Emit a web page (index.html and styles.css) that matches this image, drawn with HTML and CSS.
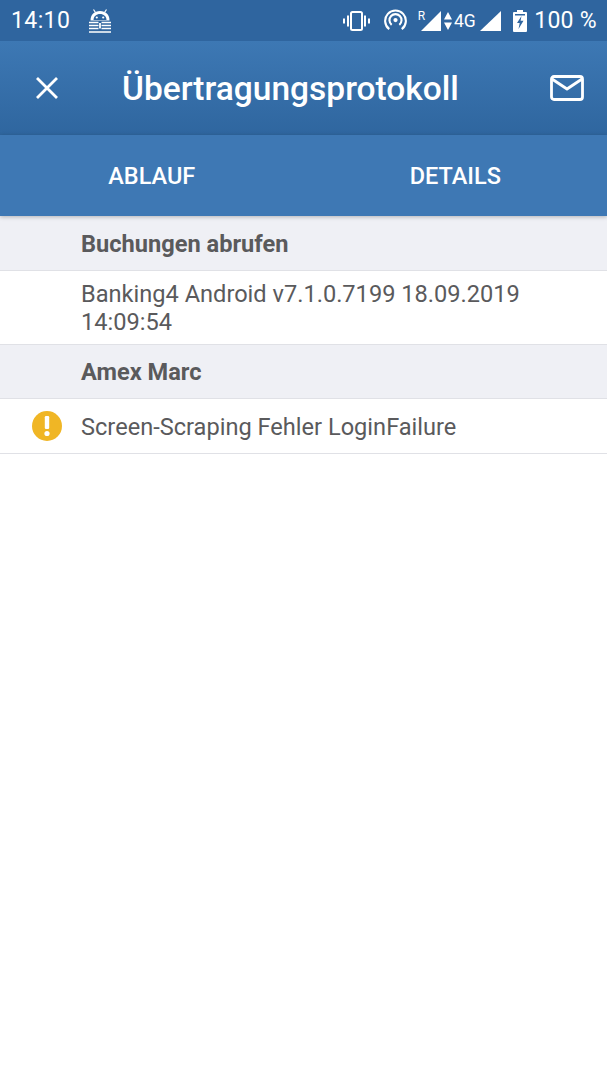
FILE: index.html
```html
<!DOCTYPE html>
<html lang="de">

<head>
  <meta charset="UTF-8">
  <meta name="viewport" content="width=device-width, initial-scale=1.0">
  <title>Übertragungsprotokoll</title>
  <link rel="stylesheet" href="styles.css">
</head>

<body>
  <!-- Statusleiste -->
  <div class="statusbar">
    <span class="clock">14:10</span>
    <svg class="ic-keepass" width="24" height="24" viewBox="0 0 24 24">
      <path d="M5.500.5l2 3M18.500.5l-2 3" stroke="#fff" stroke-width="1.200" fill="none"/>
      <path d="M2.500 11.500C2.500 5.500 6.500 2 12 2s9.500 3.500 9.500 9.500z" fill="#fff"/>
      <path d="M5.500 11c0-3.500 2.800-6 6.500-6s6.500 2.500 6.500 6z" fill="#2f659f"/>
      <circle cx="8.800" cy="8.500" r="1.100" fill="#fff"/>
      <circle cx="15.200" cy="8.500" r="1.100" fill="#fff"/>
      <path d="M1 13.500h9.500M13.500 13.500H23M1 16.500h9.500M13.500 16.500H23M1 19.500h9.500M13.500 19.500H23M1 23h22" stroke="#fff" stroke-width="1.700" fill="none"/>
      <path d="M12 14v5.500" stroke="#fff" stroke-width="1.800"/>
    </svg>
    <div class="status-right">
      <svg width="27" height="20" viewBox="0 0 27 20" fill="none" stroke="#fff">
        <rect x="8" y="1" width="11" height="18" rx="1.500" stroke-width="2"/>
        <path d="M5 4.500v11M22 4.500v11M1 7.500v5M26 7.500v5" stroke-width="2"/>
      </svg>
      <svg class="ic-hotspot" width="23" height="23" viewBox="0 0 24 24" fill="none" stroke="#fff" stroke-width="2.200">
        <circle cx="12" cy="11.500" r="2.200" fill="#fff" stroke="none"/>
        <path d="M8 16.500a6.300 6.300 0 1 1 8 0"/>
        <path d="M5.500 21a10.800 10.800 0 1 1 13 0"/>
      </svg>
      <div class="sig-r">
        <span class="roam">R</span>
        <svg width="20" height="20" viewBox="0 0 20 20"><path d="M0 20L20 0v20z" fill="#fff"/></svg>
      </div>
      <div class="sig-arrows">
        <svg width="8" height="18" viewBox="0 0 8 18"><path d="M4 0l4 7.500H0zM4 18L0 10.500h8z" fill="#fff"/></svg>
        <span class="net">4G</span>
      </div>
      <svg class="sig2" width="21" height="20" viewBox="0 0 21 20"><path d="M0 20L21 0v20z" fill="#fff"/></svg>
      <svg class="batt" width="14" height="22" viewBox="0 0 14 22">
        <path d="M4 0h6v2h3a1 1 0 0 1 1 1v18a1 1 0 0 1-1 1H1a1 1 0 0 1-1-1V3a1 1 0 0 1 1-1h3z" fill="#fff"/>
        <path d="M2 4h10v1.500H2z" fill="#2f659f"/>
        <path d="M8.500 6L4 13h2.700L5.500 19l5-8.200H7.600z" fill="#2f659f"/>
      </svg>
      <span class="pct">100 %</span>
    </div>
  </div>

  <!-- Titelleiste -->
  <div class="toolbar">
    <svg class="tb-close" width="24" height="24" viewBox="0 0 24 24" fill="none" stroke="#fff" stroke-width="2.800">
      <path d="M2 2l20 20M22 2L2 22"/>
    </svg>
    <h1 class="title">Übertragungsprotokoll</h1>
    <svg class="tb-mail" width="34" height="26" viewBox="0 0 34 26" fill="none" stroke="#fff" stroke-width="2.800" stroke-linejoin="round">
      <rect x="1.500" y="1.500" width="31" height="23" rx="2.500"/>
      <path d="M2 4l15 10L32 4"/>
    </svg>
  </div>

  <div class="tabs">
    <div class="tab">ABLAUF</div>
    <div class="tab">DETAILS</div>
  </div>

  <div class="log">
    <div class="log-head">Buchungen abrufen</div>
    <div class="log-row log-row-wrap">Banking4 Android v7.1.0.7199 18.09.2019 14:09:54</div>
    <div class="log-head">Amex Marc</div>
    <div class="log-row">
      <svg class="warn" width="30" height="30" viewBox="0 0 30 30">
        <circle cx="15" cy="15" r="15" fill="#f0b625"/>
        <rect x="12.800" y="5" width="4.400" height="13" rx="1.200" fill="#fff"/>
        <circle cx="15" cy="22.500" r="2.600" fill="#fff"/>
      </svg>
      Screen-Scraping Fehler LoginFailure
    </div>
  </div>
</body>

</html>
```

FILE: styles.css
```css
:root {
  --status-bg: #2f659f;
  --tab-bg: #3e78b4;
  --text: #5a5a5c;
  --head-bg: #eff0f5;
  --line: #e0e1e6;
}

body {
  margin: 0;
  background-color: #fff;
  font-family: Roboto, "Noto Sans", sans-serif;
  color: var(--text);
}

.statusbar {
  height: 41px;
  display: flex;
  align-items: center;
  padding: 0 10px 0 11px;
  background-color: var(--status-bg);
  color: #fff;
}

.clock {
  font-size: 23px;
  letter-spacing: 0.4px;
}

.ic-keepass {
  margin-left: 18px;
}

.status-right {
  margin-left: auto;
  display: flex;
  align-items: center;
}

.ic-hotspot {
  margin-left: 14px;
}

.sig-r {
  margin-left: 11px;
  display: flex;
}

.roam {
  font-size: 12px;
  line-height: 11px;
  margin-right: -4px;
}

.sig-arrows {
  display: flex;
  align-items: center;
  margin-left: 3px;
}

.net {
  width: 22px;
  margin-left: 2px;
  font-size: 19px;
  transform: scaleX(0.92);
  transform-origin: left;
}

.sig2 {
  margin-left: 4px;
}

.batt {
  margin-left: 12px;
}

.pct {
  font-size: 23px;
  margin-left: 7px;
  letter-spacing: 0.3px;
}

.toolbar {
  height: 94px;
  display: flex;
  align-items: center;
  padding: 0 23px 0 35px;
  background: linear-gradient(to bottom, #3d78b4, #2f669f);
}

.title {
  margin: 0 0 0 63px;
  flex: 1;
  font-size: 33.500px;
  font-weight: 500;
  color: #fff;
}

.tabs {
  height: 81px;
  display: flex;
  background-color: var(--tab-bg);
  box-shadow: 0 1px 4px rgba(0, 0, 0, 0.25);
  position: relative;
}

.tab {
  flex: 1;
  display: flex;
  align-items: center;
  justify-content: center;
  color: #fff;
  font-size: 23.500px;
  font-weight: 500;
}

.log-head {
  height: 52px;
  padding-top: 1px;
  display: flex;
  align-items: center;
  padding-left: 81px;
  background-color: var(--head-bg);
  border-bottom: 1px solid var(--line);
  font-size: 23.600px;
  font-weight: 700;
}

.log-head:first-child {
  height: 53px;
}

.log-row {
  position: relative;
  min-height: 53px;
  padding-top: 1px;
  display: flex;
  align-items: center;
  padding-left: 81px;
  padding-right: 60px;
  border-bottom: 1px solid var(--line);
  font-size: 23.600px;
  line-height: 28px;
}

.log-row-wrap {
  min-height: 72px;
}

.warn {
  position: absolute;
  left: 32px;
  top: 12px;
}
```
